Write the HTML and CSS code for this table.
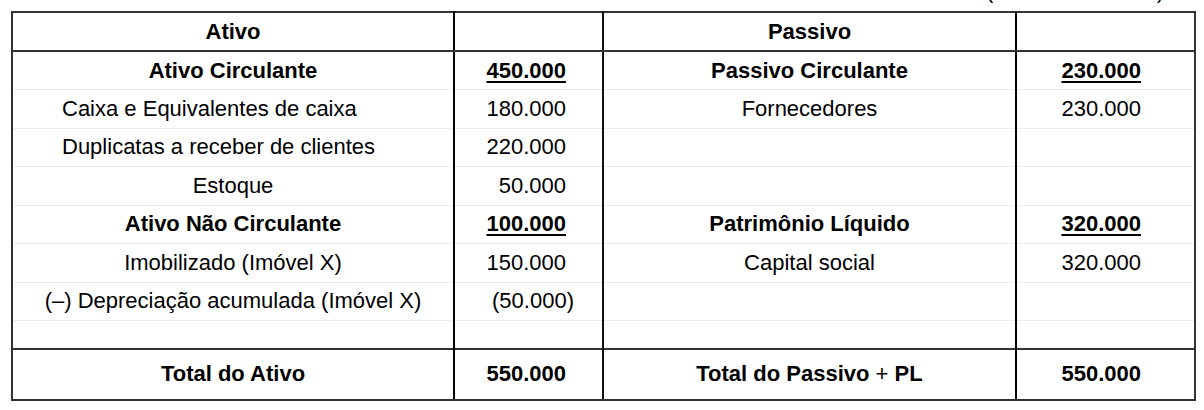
FILE: index.html
```html
<!DOCTYPE html>
<html lang="pt-BR">
<head>
<meta charset="utf-8">
<title>Balanço Patrimonial</title>
<link rel="stylesheet" href="styles.css">
</head>
<body>
<div class="page">
  <div class="caption">(Valores em reais)</div>
  <table class="balance">
    <colgroup>
      <col class="c-label-a">
      <col class="c-value-a">
      <col class="c-label-p">
      <col class="c-value-p">
    </colgroup>
    <thead>
      <tr class="row-head">
        <th class="label">Ativo</th>
        <th class="value-a"></th>
        <th class="label">Passivo</th>
        <th class="value-p"></th>
      </tr>
    </thead>
    <tbody>
      <tr class="row">
        <td class="label bold">Ativo Circulante</td>
        <td class="value-a bold"><span class="ul">450.000</span></td>
        <td class="label bold">Passivo Circulante</td>
        <td class="value-p bold"><span class="ul">230.000</span></td>
      </tr>
      <tr class="row">
        <td class="label indent">Caixa e Equivalentes de caixa</td>
        <td class="value-a">180.000</td>
        <td class="label">Fornecedores</td>
        <td class="value-p">230.000</td>
      </tr>
      <tr class="row">
        <td class="label indent">Duplicatas a receber de clientes</td>
        <td class="value-a">220.000</td>
        <td class="label"></td>
        <td class="value-p"></td>
      </tr>
      <tr class="row">
        <td class="label">Estoque</td>
        <td class="value-a">50.000</td>
        <td class="label"></td>
        <td class="value-p"></td>
      </tr>
      <tr class="row">
        <td class="label bold">Ativo Não Circulante</td>
        <td class="value-a bold"><span class="ul">100.000</span></td>
        <td class="label bold">Patrimônio Líquido</td>
        <td class="value-p bold"><span class="ul">320.000</span></td>
      </tr>
      <tr class="row">
        <td class="label">Imobilizado (Imóvel X)</td>
        <td class="value-a">150.000</td>
        <td class="label">Capital social</td>
        <td class="value-p">320.000</td>
      </tr>
      <tr class="row">
        <td class="label">(–) Depreciação acumulada (Imóvel X)</td>
        <td class="value-a"><span class="neg">(50.000)</span></td>
        <td class="label"></td>
        <td class="value-p"></td>
      </tr>
      <tr class="row-empty">
        <td class="label"></td>
        <td class="value-a"></td>
        <td class="label"></td>
        <td class="value-p"></td>
      </tr>
    </tbody>
    <tfoot>
      <tr class="row-total">
        <td class="label bold">Total do Ativo</td>
        <td class="value-a bold">550.000</td>
        <td class="label bold">Total do Passivo <span class="op">+</span> PL</td>
        <td class="value-p bold">550.000</td>
      </tr>
    </tfoot>
  </table>
</div>
</body>
</html>
```
FILE: styles.css
```css
html, body {
  margin: 0;
  padding: 0;
  background: #ffffff;
}

body {
  font-family: "Liberation Sans", Arial, sans-serif;
  font-size: 22px;
  color: #000;
}

.page {
  padding: 0 10px 0 11px;
}

.caption {
  margin-top: -20px;
  height: 22px;
  line-height: 22px;
  text-align: right;
  padding-right: 30px;
  margin-bottom: 9px;
}

.balance {
  border-collapse: collapse;
  table-layout: fixed;
  width: 1183px;
  border: 2px solid #333;
}

.c-label-a { width: 442px; }
.c-value-a { width: 149px; }
.c-label-p { width: 413px; }
.c-value-p { width: 179px; }

.balance th,
.balance td {
  padding: 0;
  vertical-align: middle;
  font-weight: normal;
  border-top: 1px solid #ececec;
  border-bottom: 1px solid #ececec;
  white-space: nowrap;
}

.balance .bold,
.balance th {
  font-weight: bold;
}

.label {
  text-align: center;
}

.label.indent {
  text-align: left;
  padding-left: 49px;
}

.value-a {
  text-align: right;
  padding-right: 36px !important;
  border-left: 2px solid #000;
  border-right: 2px solid #111;
}

.value-p {
  text-align: right;
  padding-right: 53px !important;
  border-left: 2px solid #000;
}

.neg {
  margin-right: -8px;
}

.op {
  font-weight: normal;
}

.ul {
  text-decoration: underline;
  text-decoration-thickness: 2px;
  text-underline-offset: 3px;
}

.row-head {
  height: 39px;
}

.balance .row-head th {
  border-bottom: 2px solid #333;
}

.row {
  height: 38.5px;
}

.row-empty {
  height: 28px;
}

.row-total {
  height: 51px;
}

.balance .row-total td {
  border-top: 2px solid #333;
  border-bottom: 2px solid #333;
}
```
